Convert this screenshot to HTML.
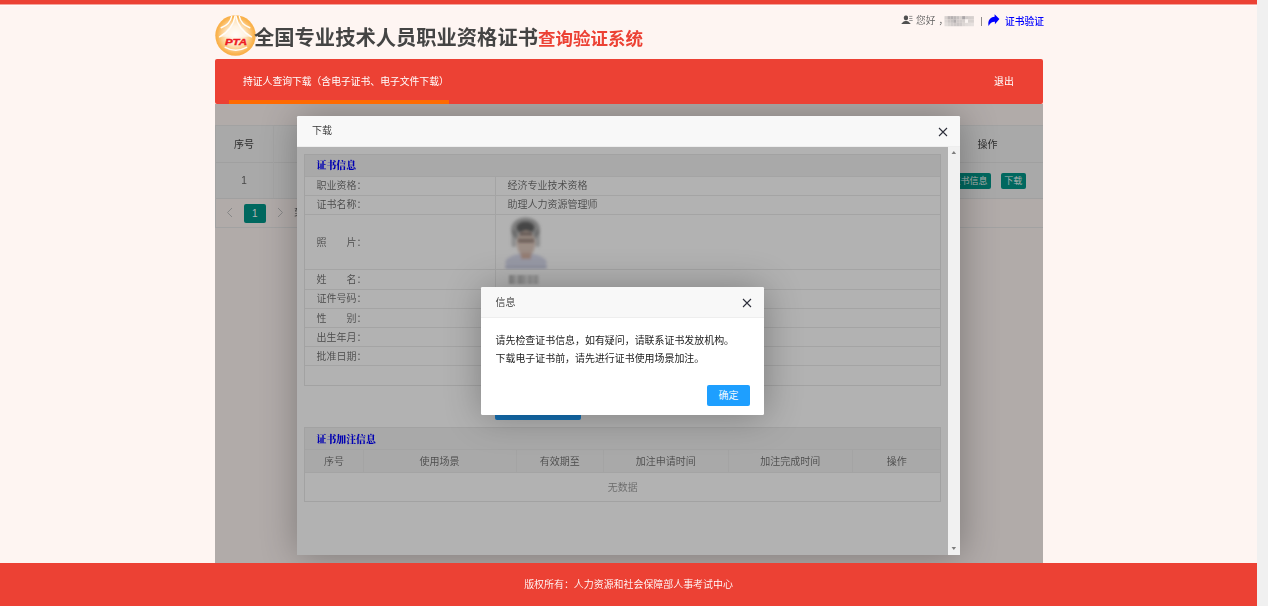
<!DOCTYPE html>
<html lang="zh-CN">
<head>
<meta charset="utf-8">
<title>全国专业技术人员职业资格证书查询验证系统</title>
<style>
*{box-sizing:border-box;margin:0;padding:0}
html,body{width:1268px;height:606px;overflow:hidden}
body{background:#fef5f2;font-family:"Liberation Sans","Noto Sans CJK SC",sans-serif;font-size:10px;color:#555;position:relative}
.abs{position:absolute}
.t{position:absolute;white-space:nowrap;line-height:14px;height:14px;font-weight:350;filter:blur(.3px)}
.c{transform:translateX(-50%)}
#topbar{left:0;top:0;width:1257px;height:5px;background:linear-gradient(#ec4134 0,#ec4134 4px,#f5a39b 4px,#f5a39b 5px)}
#topline{left:0;top:5px;width:1257px;height:1px;background:#fffaf9}
#pscroll{left:1257px;top:0;width:11px;height:606px;background:#f0f0f0}
#title{left:254px;top:24.2px;font-size:20.3px;line-height:28px;height:28px;font-weight:bold;color:#444;letter-spacing:0}
#title span{font-size:17.5px;color:#ec4134}
#nav{left:215px;top:59px;width:828px;height:45px;background:#ec4134;border-radius:2px}
#nav .ul{left:14px;top:41px;width:220px;height:4px;background:#ff6a00}
#frame{left:215px;top:104px;width:828px;height:459px;overflow:hidden;background:#fef5f2}
#footer{left:0;top:563px;width:1257px;height:43px;background:#ec4134}
.shade{position:absolute;left:0;top:0;right:0;bottom:0;background:rgba(0,0,0,.3)}
/* outer table */
#otable{left:0;top:21px;width:828px;height:103px}
.orow{position:absolute;left:0;width:828px;background:#f2f2f2;border-bottom:1px solid #e6e6e6}
.vline{position:absolute;width:1px;background:#ebebeb}
.btn{position:absolute;background:#009688;color:#fff;border-radius:2px;text-align:center;white-space:nowrap;font-weight:350}
/* modal 1 */
#m1{left:82px;top:12px;width:663px;height:439px;background:#fff;box-shadow:1px 1px 37px rgba(0,0,0,.3);border-radius:1.5px}
#m1 .title, #m2 .title{position:absolute;left:0;top:0;width:100%;height:31px;background:#f8f8f8;border-bottom:1px solid #eee;border-radius:1.5px 1.5px 0 0}
#m1c{left:0;top:31px;width:651px;height:408px;background:#fff;overflow:hidden}
#m1s{left:651px;top:31px;width:12px;height:408px;background:#f1f1f1}
.tbl{position:absolute}
.tbl:after,#otable:after{content:'';position:absolute;left:0;top:0;right:0;bottom:0;border:1px solid #e9e9e9;pointer-events:none}
#otable:after{border-right:none}
.hl{position:absolute;left:0;height:1px;background:#ebebeb}
.hd{position:absolute;left:0;background:#f2f2f2}
.lab{color:#6c6c6c}
.sec{font-family:"Liberation Serif","Noto Serif CJK SC",serif;font-weight:900;color:#0000ff;font-size:9.9px}
#m2{left:184px;top:140px;width:283px;height:128px;background:#fff;box-shadow:1px 1px 37px rgba(0,0,0,.3);border-radius:1.5px}
</style>
</head>
<body>
<div id="topbar" class="abs"></div>
<div id="topline" class="abs"></div>
<div id="pscroll" class="abs"></div>

<!-- logo -->
<svg class="abs" style="left:215px;top:15px" width="41" height="41" viewBox="0 0 41 41">
  <defs>
    <radialGradient id="lg" cx="50%" cy="50%" r="50%">
      <stop offset="0" stop-color="#fffdf8"/>
      <stop offset="0.45" stop-color="#fee9cb"/>
      <stop offset="0.72" stop-color="#fccb85"/>
      <stop offset="0.9" stop-color="#fab552"/>
      <stop offset="1" stop-color="#f9ae46"/>
    </radialGradient>
  </defs>
  <circle cx="20.5" cy="20.5" r="20.2" fill="url(#lg)"/>
  <path d="M20.5 0.8 C19.6 9 13 17.4 4.6 21.8 L36.4 21.8 C28 17.4 21.4 9 20.5 0.8Z" fill="#fffdfa" opacity=".55"/>
  <path d="M20 1 C19 9.4 12.6 17.6 4.6 21.8" fill="none" stroke="#fffdfa" stroke-width="1.5" stroke-linecap="round"/>
  <path d="M21 1 C22 9.4 28.400 17.6 36.4 21.8" fill="none" stroke="#fffdfa" stroke-width="1.5" stroke-linecap="round"/>
  <path d="M16.6 1.600 C15.6 6.6 11.600 10.6 6.200 12.8" fill="none" stroke="#fffdfa" stroke-width="1.5" stroke-linecap="round"/>
  <path d="M24.4 1.600 C25.4 6.6 29.400 10.6 34.800 12.8" fill="none" stroke="#fffdfa" stroke-width="1.5" stroke-linecap="round"/>
  <path d="M10.2 32.4 Q20.5 38.2 31.6 32.4" fill="none" stroke="#fffdfa" stroke-width="1.5" stroke-linecap="round"/>
  <text x="21" y="30" text-anchor="middle" font-family="Liberation Sans, sans-serif" font-weight="bold" font-style="italic" font-size="8.5" fill="#ee1c24" stroke="#ee1c24" stroke-width=".35" textLength="22.2" lengthAdjust="spacingAndGlyphs">PTA</text>
</svg>

<div id="title" class="t">全国专业技术人员职业资格证书<span>查询验证系统</span></div>

<!-- top right -->
<svg class="abs" style="left:901px;top:15px" width="12" height="10" viewBox="0 0 12 10">
  <rect x="2.9" y="0.6" width="4.100" height="4.600" rx="1.6" fill="#505050"/>
  <path d="M0.2 8.900 L2.6 6.500 Q3.4 6 4.100 6 L5.900 6 Q6.600 6 7.400 6.500 L9.800 8.900Z" fill="#505050"/>
  <rect x="8.2" y="0.9" width="3.2" height="0.8" fill="#808080"/>
  <rect x="8.2" y="3" width="3.2" height="0.8" fill="#808080"/>
  <rect x="8.2" y="5.100" width="3.5" height="0.8" fill="#808080"/>
</svg>
<div class="t" style="left:916px;top:14.3px;font-size:9.7px;color:#606060">您好<span style="margin-left:3px">，</span></div>
<svg class="abs" style="left:943px;top:15px" width="33" height="13" viewBox="0 0 33 13"><defs><filter id="mz" x="-10%" y="-20%" width="120%" height="140%"><feGaussianBlur stdDeviation="0.55"/></filter></defs><g filter="url(#mz)"><rect x="1.50" y="1.10" width="2.96" height="3.4" fill="#d8d2d0"/><rect x="4.44" y="1.10" width="2.96" height="3.4" fill="#bab5b5"/><rect x="7.38" y="1.10" width="2.96" height="3.4" fill="#b5b0b1"/><rect x="10.32" y="1.10" width="2.96" height="3.4" fill="#bcb7b7"/><rect x="13.26" y="1.10" width="2.96" height="3.4" fill="#c6c1c0"/><rect x="16.20" y="1.10" width="2.96" height="3.4" fill="#d6d0ce"/><rect x="19.14" y="1.10" width="2.96" height="3.4" fill="#aaa5a8"/><rect x="22.08" y="1.10" width="2.96" height="3.4" fill="#d0cac9"/><rect x="25.02" y="1.10" width="2.96" height="3.4" fill="#d4cecc"/><rect x="27.96" y="1.10" width="2.96" height="3.4" fill="#d6d0ce"/><rect x="1.50" y="4.47" width="2.96" height="3.4" fill="#dcd6d4"/><rect x="4.44" y="4.47" width="2.96" height="3.4" fill="#cdc7c6"/><rect x="7.38" y="4.47" width="2.96" height="3.4" fill="#c6c1c0"/><rect x="10.32" y="4.47" width="2.96" height="3.4" fill="#b2adae"/><rect x="13.26" y="4.47" width="2.96" height="3.4" fill="#cfc9c8"/><rect x="16.20" y="4.47" width="2.96" height="3.4" fill="#d2cccb"/><rect x="19.14" y="4.47" width="2.96" height="3.4" fill="#d6d0ce"/><rect x="22.08" y="4.47" width="2.96" height="3.4" fill="#fbf5f3"/><rect x="25.02" y="4.47" width="2.96" height="3.4" fill="#d9d3d1"/><rect x="27.96" y="4.47" width="2.96" height="3.4" fill="#d8d2d0"/><rect x="1.50" y="7.84" width="2.96" height="3.4" fill="#e4dedc"/><rect x="4.44" y="7.84" width="2.96" height="3.4" fill="#dad4d2"/><rect x="7.38" y="7.84" width="2.96" height="3.4" fill="#d2cccb"/><rect x="10.32" y="7.84" width="2.96" height="3.4" fill="#cec8c7"/><rect x="13.26" y="7.84" width="2.96" height="3.4" fill="#cbc6c5"/><rect x="16.20" y="7.84" width="2.96" height="3.4" fill="#cfc9c8"/><rect x="19.14" y="7.84" width="2.96" height="3.4" fill="#dcd6d4"/><rect x="22.08" y="7.84" width="2.96" height="3.4" fill="#e2dcda"/><rect x="25.02" y="7.84" width="2.96" height="3.4" fill="#e4dedc"/><rect x="27.96" y="7.84" width="2.96" height="3.4" fill="#e6e0de"/></g></svg>
<div class="abs" style="left:980.8px;top:16.7px;width:1.2px;height:9.8px;background:#8f8a8a;filter:blur(.3px)"></div>
<svg class="abs" style="left:988px;top:14px" width="12" height="12.5" viewBox="0 0 12 12.5">
  <path d="M6.600 0.200 L11.400 5.100 L6.900 10.200 V7.700 C4.100 7.600 2 9 0.600 12 C-0.700 6.600 2.400 2.900 6.600 2.700Z" fill="#0000ff"/>
</svg>
<div class="t" style="left:1005px;top:14.7px;font-size:9.75px;color:#0000ff;font-weight:500">证书验证</div>

<!-- nav -->
<div id="nav" class="abs">
  <div class="t" style="left:28px;top:16.1px;font-size:9.8px;color:#fff;font-weight:400">持证人查询下载（含电子证书、电子文件下载）</div>
  <div class="t" style="left:779px;top:16.1px;font-size:9.9px;color:#fff;font-weight:400">退出</div>
  <div class="abs ul"></div>
</div>

<!-- outer iframe -->
<div id="frame" class="abs">
  <div id="otable" class="abs">
    <div class="orow" style="top:0;height:37.5px"></div>
    <div class="orow" style="top:37.5px;height:36.5px"></div>
    <div class="vline" style="left:58px;top:0;height:73px"></div>
    <div class="t c" style="left:29px;top:12.5px;color:#444;font-weight:400">序号</div>
    <div class="t c" style="left:29px;top:48.5px;color:#666">1</div>
    <div class="t c" style="left:772.5px;top:12.5px;color:#444;font-weight:400">操作</div>
    <div class="btn" style="left:733px;top:47.5px;width:43px;height:16.5px;line-height:16.5px;font-size:9px">证书信息</div>
    <div class="btn" style="left:786px;top:47.5px;width:24.5px;height:16.5px;line-height:16.5px;font-size:9px">下载</div>
    <!-- pagination -->
    <svg class="abs" style="left:11px;top:82px" width="8" height="11" viewBox="0 0 8 11"><path d="M6 1 L1.5 5.5 L6 10" fill="none" stroke="#c2c2c2" stroke-width="1"/></svg>
    <div class="btn" style="left:28.5px;top:79px;width:22.5px;height:19px;line-height:19px;font-size:10px">1</div>
    <svg class="abs" style="left:60.5px;top:82px" width="8" height="11" viewBox="0 0 8 11"><path d="M2 1 L6.5 5.5 L2 10" fill="none" stroke="#c2c2c2" stroke-width="1"/></svg>
    <div class="t" style="left:79px;top:81px;color:#555">到第</div>
  </div>
  <div class="shade"></div>

  <!-- modal 1 -->
  <div id="m1" class="abs">
    <div class="title"></div>
    <div class="t" style="left:15px;top:7.8px;color:#333;font-size:10px">下载</div>
    <svg class="abs" style="left:641px;top:10.5px" width="10" height="10" viewBox="0 0 10 10"><path d="M1 1 L9 9 M9 1 L1 9" stroke="#2d2f3b" stroke-width="1.1" fill="none"/></svg>
    <div id="m1c" class="abs">
      <!-- table 1 : frame coords => m1c origin (297,147) -->
      <div class="tbl" style="left:7px;top:7px;width:637px;height:231.5px">
        <div class="hd" style="top:0;width:637px;height:22px"></div>
        <div class="hl" style="top:22px;width:637px"></div>
        <div class="hl" style="top:41px;width:637px"></div>
        <div class="hl" style="top:60px;width:637px"></div>
        <div class="hl" style="top:115px;width:637px"></div>
        <div class="hl" style="top:134.5px;width:637px"></div>
        <div class="hl" style="top:153.5px;width:637px"></div>
        <div class="hl" style="top:173px;width:637px"></div>
        <div class="hl" style="top:192px;width:637px"></div>
        <div class="hl" style="top:211px;width:637px"></div>
        <div class="vline" style="left:191px;top:22px;height:189px"></div>
        <div class="t sec" style="left:12.5px;top:5px">证书信息</div>
        <div class="t lab" style="left:12.5px;top:25px">职业资格：</div>
        <div class="t lab" style="left:12.5px;top:44px">证书名称：</div>
        <div class="t lab" style="left:12.5px;top:81.5px">照　　片：</div>
        <div class="t lab" style="left:12.5px;top:118.5px">姓　　名：</div>
        <div class="t lab" style="left:12.5px;top:137.5px">证件号码：</div>
        <div class="t lab" style="left:12.5px;top:157.7px">性　　别：</div>
        <div class="t lab" style="left:12.5px;top:176.7px">出生年月：</div>
        <div class="t lab" style="left:12.5px;top:195.7px">批准日期：</div>
        <div class="t lab" style="left:203.5px;top:25px">经济专业技术资格</div>
        <div class="t lab" style="left:203.5px;top:44px">助理人力资源管理师</div>
        <!-- photo (blurred) -->
        <svg class="abs" style="left:195.5px;top:60px" width="56" height="56" viewBox="0 0 56 56">
          <defs><filter id="pb" x="-20%" y="-20%" width="140%" height="140%"><feGaussianBlur stdDeviation="1.5"/></filter>
          <filter id="pb2" x="-20%" y="-20%" width="140%" height="140%"><feGaussianBlur stdDeviation="0.9"/></filter></defs>
          <g filter="url(#pb)">
            <ellipse cx="25.5" cy="15.5" rx="14.5" ry="12" fill="#6a6a6a" opacity=".5"/>
            <ellipse cx="25.5" cy="13.5" rx="9" ry="6" fill="#2e2e2e" opacity=".6"/>
            <rect x="11.5" y="16" width="5" height="17" rx="2" fill="#7a7a7a" opacity=".4"/>
            <rect x="35" y="16" width="5" height="17" rx="2" fill="#7a7a7a" opacity=".4"/>
            <path d="M5.5 55 L5.5 47 C8 42 16 41 19 40 L33 40 C36 41 44 42 46.5 47 L46.5 55Z" fill="#d2d5ea" opacity=".85"/>
            <ellipse cx="26" cy="30" rx="9" ry="13" fill="#dcc4b8" opacity=".9"/>
            <rect x="21" y="39" width="10" height="6" fill="#d6b4a4"/>
          </g>
          <g filter="url(#pb2)">
            <rect x="17.5" y="24.5" width="17" height="4.5" rx="2" fill="#5c4a46" opacity=".4"/>
            <rect x="20" y="18" width="12" height="4" fill="#3a3432" opacity=".35"/>
            <rect x="5.500" y="52.5" width="41" height="1" fill="#9a9db8" opacity=".45"/>
          </g>
        </svg>
        <div class="abs" style="left:204.5px;top:120.5px;width:30px;height:9.5px;filter:blur(.8px);background:linear-gradient(90deg,#777 0,#999 15%,#ddd 25%,#888 35%,#aaa 50%,#ddd 60%,#999 70%,#ccc 80%,#999 90%,#ddd 100%);opacity:.5"></div>
      </div>
      <!-- blue button -->
      <div class="btn" style="left:198px;top:245px;width:86px;height:28.2px;line-height:28px;background:#1e9fff;font-size:10px">证书使用场景加注</div>
      <!-- table 2 -->
      <div class="tbl" style="left:7px;top:280.4px;width:637px;height:74.5px">
        <div class="hd" style="top:0;width:637px;height:44.5px"></div>
        <div class="hl" style="top:22px;width:637px"></div>
        <div class="hl" style="top:44.5px;width:637px"></div>
        <div class="vline" style="left:59px;top:22px;height:22.5px"></div>
        <div class="vline" style="left:211.5px;top:22px;height:22.5px"></div>
        <div class="vline" style="left:299px;top:22px;height:22.5px"></div>
        <div class="vline" style="left:423.5px;top:22px;height:22.5px"></div>
        <div class="vline" style="left:548px;top:22px;height:22.5px"></div>
        <div class="t sec" style="left:12.5px;top:5.2px">证书加注信息</div>
        <div class="t c lab" style="left:30px;top:27.7px">序号</div>
        <div class="t c lab" style="left:135.6px;top:27.7px">使用场景</div>
        <div class="t c lab" style="left:255.7px;top:27.7px">有效期至</div>
        <div class="t c lab" style="left:361.7px;top:27.7px">加注申请时间</div>
        <div class="t c lab" style="left:486.3px;top:27.7px">加注完成时间</div>
        <div class="t c lab" style="left:592.7px;top:27.7px">操作</div>
        <div class="t c" style="left:318.8px;top:53.2px;color:#999">无数据</div>
      </div>
      <div class="shade"></div>
      <!-- modal 2 -->
      <div id="m2" class="abs">
        <div class="title"></div>
        <div class="t" style="left:14.5px;top:8.5px;color:#333;font-size:10px">信息</div>
        <svg class="abs" style="left:261px;top:10.5px" width="10" height="10" viewBox="0 0 10 10"><path d="M1 1 L9 9 M9 1 L1 9" stroke="#2d2f3b" stroke-width="1.1" fill="none"/></svg>
        <div class="t" style="left:14.5px;top:47px;color:#222;font-weight:400;font-size:9.95px">请先检查证书信息，如有疑问，请联系证书发放机构。</div>
        <div class="t" style="left:14.5px;top:64.7px;color:#222;font-weight:400;font-size:9.95px">下载电子证书前，请先进行证书使用场景加注。</div>
        <div class="btn" style="left:226px;top:98px;width:43px;height:21px;line-height:21px;background:#1e9fff;font-size:10px">确定</div>
      </div>
    </div>
    <div id="m1s" class="abs">
      <svg class="abs" style="left:3.1px;top:4.4px" width="5.6" height="3" viewBox="0 0 6 4"><path d="M0 4 L3 0 L6 4Z" fill="#7d7d7d"/></svg>
      <svg class="abs" style="left:3.1px;top:400.4px" width="5.6" height="3" viewBox="0 0 6 4"><path d="M0 0 L3 4 L6 0Z" fill="#7d7d7d"/></svg>
    </div>
  </div>
</div>

<!-- footer -->
<div id="footer" class="abs">
  <div class="t c" style="left:628.5px;top:14.5px;color:#fff;font-size:9.95px">版权所有：人力资源和社会保障部人事考试中心</div>
</div>
</body>
</html>
